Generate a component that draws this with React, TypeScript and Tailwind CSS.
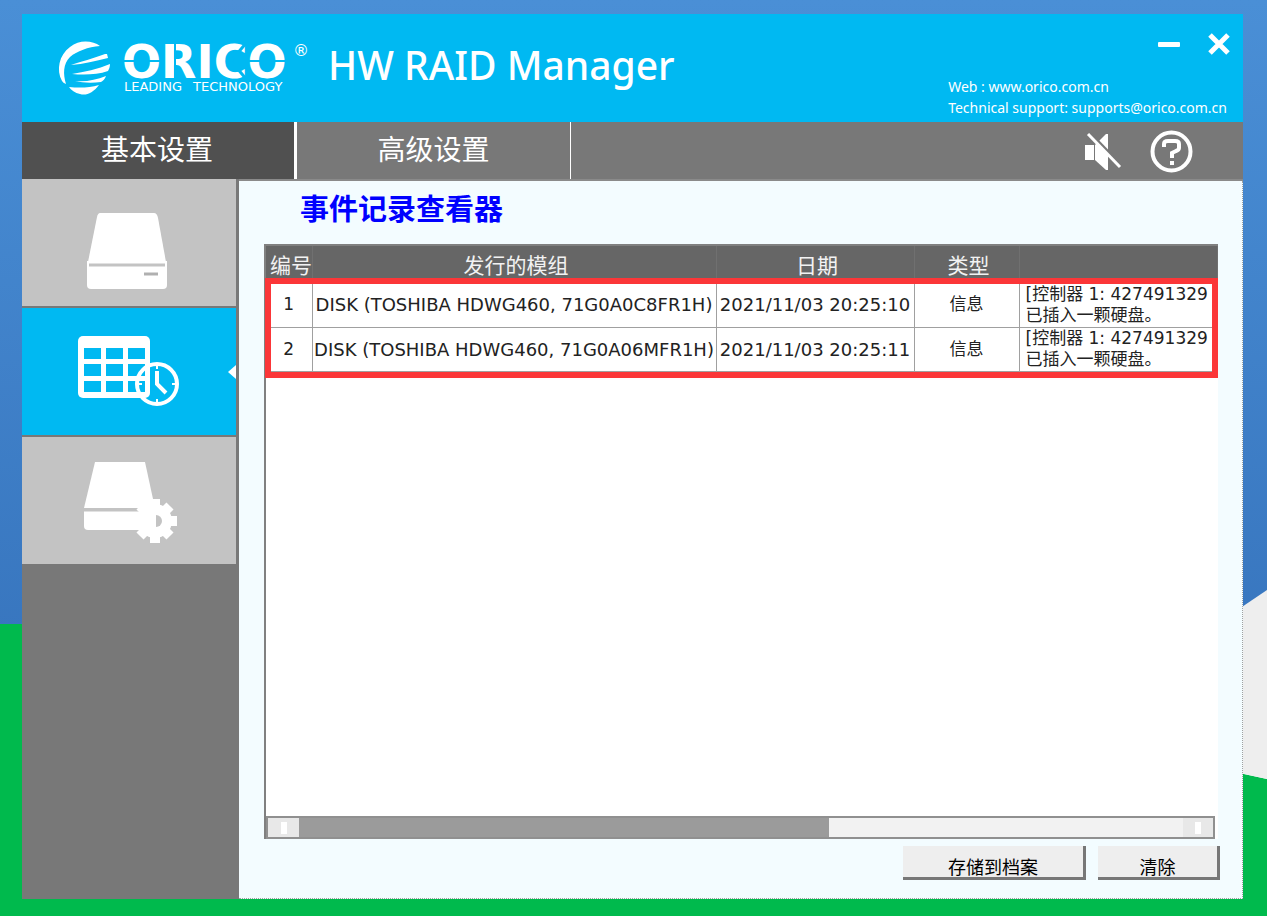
import { useState } from "react"

const tabs = ["基本设置", "高级设置"]

const events = [
  {
    id: 1,
    module: "DISK (TOSHIBA HDWG460, 71G0A0C8FR1H)",
    date: "2021/11/03 20:25:10",
    type: "信息",
    source: "[控制器 1: 427491329",
    message: "已插入一颗硬盘。",
  },
  {
    id: 2,
    module: "DISK (TOSHIBA HDWG460, 71G0A06MFR1H)",
    date: "2021/11/03 20:25:11",
    type: "信息",
    source: "[控制器 1: 427491329",
    message: "已插入一颗硬盘。",
  },
]

function Wallpaper() {
  return (
    <svg className="absolute inset-0 h-full w-full" viewBox="0 0 1267 916" preserveAspectRatio="none" aria-hidden="true">
      <defs>
        <linearGradient id="sky" x1="0" y1="0" x2="0" y2="1">
          <stop offset="0" stopColor="#4a8fd6" />
          <stop offset="1" stopColor="#3876bf" />
        </linearGradient>
      </defs>
      <rect width="1267" height="640" fill="url(#sky)" />
      <path d="M0 624H1230V771L1267 779V916H0Z" fill="#00ba4d" />
      <path d="M1230 615L1267 590V779L1230 771Z" fill="#eeeeee" />
    </svg>
  )
}

function Logo() {
  return (
    <svg width="255" height="62" viewBox="0 0 255 62" fill="#fff" role="img" aria-label="ORICO">
      <path d="M45 8C38 3 25 1 15 9C4 17 1 32 7 43Q8 45 11 46C8 36 8 26 15 19C22 13 33 9 45 8Z" />
      <path d="M16 27C25 24 39 20 50 16H52L53 20C40 23 29 26 16 27Z" />
      <path d="M17 36C29 34 43 31 55 26C55 29 54 31 53 33C42 37 28 37 17 36Z" />
      <path d="M20 43C31 44 41 42 51 38C50 41 48 43 46 44C38 45 28 45 20 43Z" />
      <path d="M14 49C24 50 34 50 44 47C38 55 31 58 25 56C20 55 16 52 14 49Z" />
      <text x="67" y="40" fontSize="46" fontWeight="700" fontFamily="DejaVu Sans">ORICO</text>
      {/* stencil cuts */}
      <g stroke="#00b9f2" strokeWidth="2">
        <path d="M67 23H106M193 23H233M120 4V42" />
        <path d="M176 23L192 4M176 23L192 42" strokeWidth="3" />
      </g>
      <text x="69" y="53" fontSize="13" fontFamily="DejaVu Sans">LEADING</text>
      <text x="138" y="53" fontSize="13" fontFamily="DejaVu Sans">TECHNOLOGY</text>
      <text x="238" y="18" fontSize="16" fontFamily="DejaVu Sans">®</text>
    </svg>
  )
}

function DriveIcon() {
  return (
    <svg width="80" height="76" viewBox="0 0 80 76" fill="#fff" aria-hidden="true">
      <path d="M13 0H67Q70 0 71 5L79 49H1L10 4Q11 0 13 0Z" />
      <path d="M0 48H80V72Q80 76 76 76H4Q0 76 0 72Z" />
      <path d="M2 52H78" stroke="#c3c3c3" strokeWidth="3" />
      <path d="M57 61H71" stroke="#b0b0b0" strokeWidth="3" />
    </svg>
  )
}

function CalendarIcon() {
  return (
    <svg width="102" height="72" viewBox="0 0 102 72" aria-hidden="true">
      <rect width="72" height="62" rx="5" fill="#fff" />
      <g fill="#00b9f2">
        <path d="M6 12H23V23H6ZM28 12H45V23H28ZM50 12H67V23H50Z" />
        <path d="M6 28H23V40H6ZM28 28H45V40H28ZM50 28H67V40H50Z" />
        <path d="M6 45H23V56H6ZM28 45H45V56H28ZM50 45H67V56H50Z" />
        <path d="M72 26A22 22 0 0 1 72 70L69 62H72Z" />
      </g>
      <g fill="none" stroke="#fff">
        <circle cx="79" cy="48" r="20" strokeWidth="4" />
        <path d="M79 35V48L88 57" strokeWidth="4" />
        <path d="M79 28V33M79 63V68M59 48H64M94 48H99" strokeWidth="2" />
      </g>
    </svg>
  )
}

function DriveGearIcon() {
  return (
    <svg width="94" height="82" viewBox="0 0 94 82" fill="#fff" aria-hidden="true">
      <path d="M11 0H61L69 37V46H0Z" />
      <path d="M0 49H60V68H4Q0 68 0 64Z" />
      <path d="M0 48H55" stroke="#c3c3c3" strokeWidth="3" />
      <circle cx="71" cy="59" r="17" />
      <path
        d="M71 37V81M49 59H93M56 44L86 74M86 44L56 74"
        stroke="#fff"
        strokeWidth="10"
      />
      <path d="M72 53A6 6 0 0 1 72 65Z" fill="#c3c3c3" />
    </svg>
  )
}

const sections = [
  { label: "硬盘", icon: <DriveIcon />, pad: "pr-1 pt-4" },
  { label: "事件记录", icon: <CalendarIcon />, pad: "" },
  { label: "硬盘设置", icon: <DriveGearIcon />, pad: "pl-1 pt-1" },
]

function Header() {
  return (
    <header className="flex h-[108px] shrink-0 justify-between bg-[#00b9f2] text-white">
      <div className="flex items-start pl-[33px] pt-6">
        <Logo />
        <h1 className="pl-[18px] font-['Noto_Sans'] text-[39px] font-medium leading-[54px]">HW RAID Manager</h1>
      </div>
      <div className="flex flex-col items-end pr-3 pt-4">
        <div className="flex gap-[26px]">
          <button aria-label="最小化" className="flex h-7 w-6 items-center justify-center">
            <svg width="22" height="5"><rect width="22" height="5" rx="1" fill="#fff" /></svg>
          </button>
          <button aria-label="关闭" className="flex h-7 w-6 items-center justify-center">
            <svg width="24" height="24" viewBox="0 0 24 24">
              <path d="M3 3L21 21M21 3L3 21" stroke="#fff" strokeWidth="5" />
            </svg>
          </button>
        </div>
        <div className="pr-1 pt-[18px] font-['Noto_Sans'] text-sm leading-[21px]">
          <p>Web : <a href="#web">www.orico.com.cn</a></p>
          <p>Technical support: <a href="#support">supports@orico.com.cn</a></p>
        </div>
      </div>
    </header>
  )
}

function EventTable() {
  return (
    <div className="relative mr-0.5 flex flex-1 flex-col border-l-2 border-t-2 border-[#808080] bg-white">
      <div className="flex-1 overflow-hidden">
        <table className="w-full table-fixed border-collapse text-[#222]">
          <thead>
            <tr className="h-[37px] bg-[#666] text-[21px] leading-[33px] text-[#f2f2f2] [&>th]:border-r [&>th]:border-[#707070] [&>th]:p-0 [&>th]:pl-1 [&>th]:pt-1 [&>th]:font-normal">
              <th className="w-[46px] whitespace-nowrap">编号</th>
              <th className="w-[404px]">发行的模组</th>
              <th className="w-[198px]">日期</th>
              <th className="w-[105px]">类型</th>
              <th aria-label="内容"></th>
            </tr>
          </thead>
          <tbody>
            {events.map((e) => (
              <tr
                key={e.id}
                className="h-11 whitespace-nowrap text-[17px] leading-[21px] [&>td]:border-b [&>td]:border-r [&>td]:border-[#a0a0a0] [&>td]:p-0"
              >
                <td className="text-center">{e.id}</td>
                <td className="text-center text-lg leading-[21px]">{e.module}</td>
                <td className="text-center text-lg leading-[21px]">{e.date}</td>
                <td className="text-center">{e.type}</td>
                <td>
                  <div className="overflow-hidden pl-1.5">
                    {e.source}
                    <br />
                    {e.message}
                  </div>
                </td>
              </tr>
            ))}
          </tbody>
        </table>
      </div>
      {/* horizontal scrollbar */}
      <div className="mr-[3px] flex h-[23px] border-2 border-[#909090] bg-[#f2f2f2]">
        <button aria-label="向左" className="flex w-[31px] items-center justify-center bg-[#e8e8e8]">
          <span className="h-3 w-1.5 bg-white" />
        </button>
        <div className="flex flex-1">
          <div className="w-3/5 bg-[#9b9b9b]" />
        </div>
        <button aria-label="向右" className="flex w-[30px] items-center justify-center bg-[#e8e8e8]">
          <span className="h-3 w-1.5 bg-white" />
        </button>
      </div>
      <div className="pointer-events-none absolute -left-px right-0 top-8 h-[100px] border-6 border-[#fb3638]" />
    </div>
  )
}

export default function App() {
  const [tab, setTab] = useState(0)
  const [section, setSection] = useState(1)

  return (
    <div className="relative flex min-h-screen flex-col pb-[17px] pl-[22px] pr-6 pt-[14px] font-['DejaVu_Sans','Noto_Sans_CJK_SC',sans-serif]">
      <Wallpaper />
      <div className="relative flex flex-1 flex-col">
        <Header />

        <nav className="flex h-[57px] shrink-0 bg-[#787878] text-[28px] text-white">
          {tabs.map((name, i) => (
            <button
              key={name}
              onClick={() => setTab(i)}
              className={
                i === tab
                  ? "w-[275px] border-r-3 border-white bg-[#505050] pr-0.5"
                  : "w-[274px] border-r border-white"
              }
            >
              {name}
            </button>
          ))}
          <div className="ml-auto flex items-center gap-7 pr-[50px] pt-0.5">
            <button aria-label="静音">
              <svg width="38" height="38" viewBox="0 0 38 38">
                <path d="M1 12H10V27H1Z" fill="#fff" />
                <path d="M11 12L22 1H24V37H22L11 27Z" fill="#fff" />
                <path d="M6 0L37 32" stroke="#787878" strokeWidth="3" />
                <path d="M4 1L36 34" stroke="#fff" strokeWidth="3" />
              </svg>
            </button>
            <button aria-label="帮助">
              <svg width="43" height="43" viewBox="0 0 43 43" fill="none" stroke="#fff">
                <circle cx="21.500" cy="21.500" r="19" strokeWidth="4" />
                <path d="M14 17V14Q14 11 18 11H25Q29 11 29 14V18Q29 20 26 21L22 23V28" strokeWidth="4" />
                <path d="M22 31V35" strokeWidth="4" />
              </svg>
            </button>
          </div>
        </nav>

        <div className="flex flex-1">
          <aside className="flex w-[217px] shrink-0 flex-col gap-0.5 bg-[#787878] pr-[3px]">
            {sections.map((s, i) => (
              <button
                key={s.label}
                aria-label={s.label}
                onClick={() => setSection(i)}
                className={`relative flex h-[127px] items-center justify-center ${s.pad} ${
                  i === section ? "bg-[#00b9f2]" : "bg-[#c3c3c3]"
                }`}
              >
                {s.icon}
                {i === section && (
                  <svg className="absolute right-0 top-1/2 -translate-y-1/2" width="8" height="14">
                    <path d="M8 0V14L0 7Z" fill="#fff" />
                  </svg>
                )}
              </button>
            ))}
          </aside>

          <main className="flex min-w-0 flex-1 flex-col border-t-2 border-t-[#8a8a8a] bg-[#f3fcff]">
            <div className="flex flex-1 flex-col border-b border-r border-dotted border-[#a0a0a0] pb-[18px] pl-[25px] pr-[22px]">
              <h2 className="pb-3 pl-9 pt-2 text-[29px] font-bold leading-[43px] text-[#0000ff]">事件记录查看器</h2>
              <EventTable />
              <div className="flex justify-end gap-3 pt-[7px] text-lg text-black">
                <button className="h-[34px] w-[183px] border-b-3 border-r-3 border-[#777] bg-[#eee] pt-2">存储到档案</button>
                <button className="h-[34px] w-[122px] border-b-3 border-r-3 border-[#777] bg-[#eee] pt-2">清除</button>
              </div>
            </div>
          </main>
        </div>
      </div>
    </div>
  )
}
